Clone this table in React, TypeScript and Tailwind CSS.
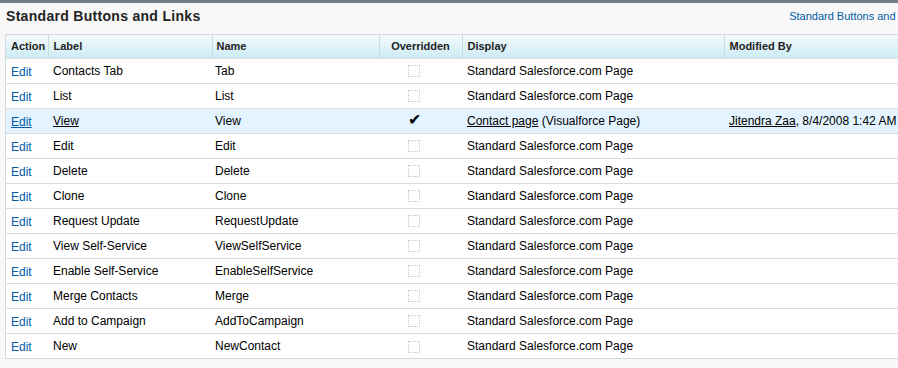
const rows = [
  { label: "Contacts Tab", name: "Tab" },
  { label: "List", name: "List" },
  { label: "View", name: "View", overridden: true },
  { label: "Edit", name: "Edit" },
  { label: "Delete", name: "Delete" },
  { label: "Clone", name: "Clone" },
  { label: "Request Update", name: "RequestUpdate" },
  { label: "View Self-Service", name: "ViewSelfService" },
  { label: "Enable Self-Service", name: "EnableSelfService" },
  { label: "Merge Contacts", name: "Merge" },
  { label: "Add to Campaign", name: "AddToCampaign" },
  { label: "New", name: "NewContact" },
];

export default function App() {
  return (
    <div className="w-[898px] h-[368px] overflow-hidden bg-[#f8f8f8] font-['Liberation_Sans',Arial,sans-serif] text-[12px] text-black">
      <div className="h-[3px] bg-[#737b8c]" />
      <div className="flex items-center justify-between h-[27px] pl-[6px] pr-[3px]">
        <h2 className="font-bold text-[14px] tracking-[0.3px] text-[#222]">Standard Buttons and Links</h2>
        <a className="text-[11px] text-[#015ba7] whitespace-nowrap -mr-[55px]">Standard Buttons and Links Help</a>
      </div>
      <div className="ml-[5px] mt-[4px] w-[960px] border border-[#d4dadc] bg-white">
        <table className="w-full border-collapse table-fixed">
          <colgroup>
            <col className="w-[42px]" />
            <col className="w-[164px]" />
            <col className="w-[167px]" />
            <col className="w-[83px]" />
            <col className="w-[262px]" />
            <col />
          </colgroup>
          <thead>
            <tr className="h-[23px] bg-gradient-to-b from-[#f4fbfd] to-[#cdebf4] text-[11px] font-bold text-[#222] text-left">
              <th className="pl-[5px] font-bold">Action</th>
              <th className="pl-[5px] border-l border-[#c9dce3] font-bold">Label</th>
              <th className="pl-[4px] border-l border-[#c9dce3] font-bold">Name</th>
              <th className="text-center border-l border-[#c9dce3] font-bold">Overridden</th>
              <th className="pl-[5px] border-l border-[#c9dce3] font-bold">Display</th>
              <th className="pl-[5px] border-l border-[#c9dce3] font-bold">Modified By</th>
            </tr>
          </thead>
          <tbody>
            {rows.map((r) => (
              <tr
                key={r.name}
                className={`h-[25px] border-t border-[#dcdcdc] ${r.overridden ? "bg-[#e3f3ff]" : ""}`}
              >
                <td className="pl-[5px] pt-[2px]">
                  <a className={`text-[#015ba7] ${r.overridden ? "underline" : ""}`}>Edit</a>
                </td>
                <td className="pl-[5px]">
                  <span className={r.overridden ? "underline" : ""}>{r.label}</span>
                </td>
                <td className="pl-[3px]">{r.name}</td>
                <td className="text-center">
                  {r.overridden ? (
                    <span className="inline-block text-[16px] leading-none mr-[13px]">✔</span>
                  ) : (
                    <span className="inline-block align-middle w-[12px] h-[12px] border border-dotted border-[#c8c8c8] mr-[13px]" />
                  )}
                </td>
                <td className="pl-[5px] whitespace-nowrap">
                  {r.overridden ? (
                    <>
                      <span className="underline">Contact page</span> (Visualforce Page)
                    </>
                  ) : (
                    "Standard Salesforce.com Page"
                  )}
                </td>
                <td className="pl-[5px] whitespace-nowrap">
                  {r.overridden ? (
                    <>
                      <span className="underline">Jitendra Zaa</span>, 8/4/2008 1:42 AM
                    </>
                  ) : null}
                </td>
              </tr>
            ))}
          </tbody>
        </table>
      </div>
    </div>
  );
}
